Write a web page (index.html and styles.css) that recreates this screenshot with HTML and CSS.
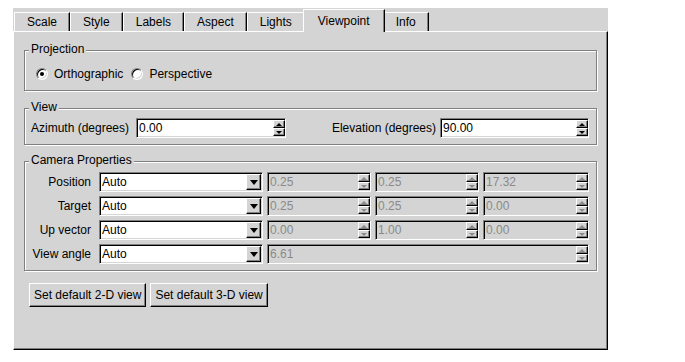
FILE: index.html
```html
<!DOCTYPE html>
<html>
<head>
<meta charset="utf-8">
<link rel="stylesheet" href="styles.css">
</head>
<body>
<div class="dialog">
  <div class="tabs">
    <div class="tab">Scale</div>
    <div class="tab">Style</div>
    <div class="tab">Labels</div>
    <div class="tab">Aspect</div>
    <div class="tab">Lights</div>
    <div class="tab active">Viewpoint</div>
    <div class="tab">Info</div>
  </div>
  <div class="pane">
    <fieldset class="group">
      <legend>Projection</legend>
      <div class="radios">
        <span class="radio"><span class="rb on"></span>Orthographic</span>
        <span class="radio"><span class="rb"></span>Perspective</span>
      </div>
    </fieldset>
    <fieldset class="group">
      <legend>View</legend>
      <div class="viewrow">
        <div class="pair pair-left">
          <span>Azimuth (degrees)</span>
          <div class="field spin w150"><span class="val">0.00</span><span class="arrows"><span class="ar up"></span><span class="ar dn"></span></span></div>
        </div>
        <div class="pair pair-right">
          <span>Elevation (degrees)</span>
          <div class="field spin w149"><span class="val">90.00</span><span class="arrows"><span class="ar up"></span><span class="ar dn"></span></span></div>
        </div>
      </div>
    </fieldset>
    <fieldset class="group">
      <legend>Camera Properties</legend>
      <div class="cam">
        <span class="lbl">Position</span>
        <div class="field combo"><span class="val">Auto</span><span class="drop"></span></div>
        <div class="field spin off"><span class="val">0.25</span><span class="arrows"><span class="ar up"></span><span class="ar dn"></span></span></div>
        <div class="field spin off"><span class="val">0.25</span><span class="arrows"><span class="ar up"></span><span class="ar dn"></span></span></div>
        <div class="field spin off"><span class="val">17.32</span><span class="arrows"><span class="ar up"></span><span class="ar dn"></span></span></div>

        <span class="lbl">Target</span>
        <div class="field combo"><span class="val">Auto</span><span class="drop"></span></div>
        <div class="field spin off"><span class="val">0.25</span><span class="arrows"><span class="ar up"></span><span class="ar dn"></span></span></div>
        <div class="field spin off"><span class="val">0.25</span><span class="arrows"><span class="ar up"></span><span class="ar dn"></span></span></div>
        <div class="field spin off"><span class="val">0.00</span><span class="arrows"><span class="ar up"></span><span class="ar dn"></span></span></div>

        <span class="lbl">Up vector</span>
        <div class="field combo"><span class="val">Auto</span><span class="drop"></span></div>
        <div class="field spin off"><span class="val">0.00</span><span class="arrows"><span class="ar up"></span><span class="ar dn"></span></span></div>
        <div class="field spin off"><span class="val">1.00</span><span class="arrows"><span class="ar up"></span><span class="ar dn"></span></span></div>
        <div class="field spin off"><span class="val">0.00</span><span class="arrows"><span class="ar up"></span><span class="ar dn"></span></span></div>

        <span class="lbl">View angle</span>
        <div class="field combo"><span class="val">Auto</span><span class="drop"></span></div>
        <div class="field spin off wide"><span class="val">6.61</span><span class="arrows"><span class="ar up"></span><span class="ar dn"></span></span></div>
      </div>
    </fieldset>
    <div class="buttons">
      <button class="btn" type="button">Set default 2-D view</button>
      <button class="btn" type="button">Set default 3-D view</button>
    </div>
  </div>
</div>
</body>
</html>
```
FILE: styles.css
```css
* { box-sizing: border-box; }

body {
  margin: 8px 0 0 13px;
  background: #fff;
  font: 12px/14px "Liberation Sans", Arial, sans-serif;
  color: #000;
}

.dialog {
  width: 595px;
  height: 342px;
  background: #d4d4d4;
  display: flex;
  flex-direction: column;
}

/* ---------- tabs ---------- */
.tabs {
  height: 23px;
  flex: none;
  display: flex;
  align-items: flex-end;
  padding-left: 1px;
  position: relative;
  z-index: 1;
}
.tab {
  height: 19px;
  line-height: 18px;
  padding: 0 12px;
  border-top: 1px solid #fff;
  border-left: 1px solid #fff;
  border-right: 1px solid #000;
  box-shadow: inset -1px 0 0 #808080;
  white-space: nowrap;
}
.tab.active {
  position: relative;
  height: 23px;
  margin: 0 -2px -1px;
  padding: 2px 14px 0;
  background: #d4d4d4;
}

/* ---------- pane ---------- */
.pane {
  flex: 1;
  border-top: 1px solid #fff;
  border-left: 1px solid #fff;
  border-right: 1px solid #000;
  border-bottom: 1px solid #000;
  box-shadow: inset -1px -1px 0 #808080;
  padding: 10px 10px 0;
}

/* ---------- etched groups ---------- */
.group {
  margin: 0;
  padding: 0;
  min-width: 0;
  border: 1px solid #808080;
  box-shadow: inset 1px 1px 0 #fff, 1px 1px 0 #fff;
}
.group + .group { margin-top: 9px; }
.group + .group + .group { margin-top: 8px; }
.group legend {
  margin-left: 4px;
  padding: 0 2px 3px;
  line-height: 14px;
  background: #d4d4d4;
}

/* ---------- projection ---------- */
.radios {
  display: flex;
  align-items: center;
  height: 22px;
  margin: 4px 6px 5px;
}
.radio {
  display: flex;
  align-items: center;
  margin-left: 5px;
  margin-right: 3px;
}
.radio + .radio { margin-left: 5px; }
.rb {
  width: 12px;
  height: 12px;
  margin-right: 6px;
  border-radius: 50%;
  border: 1px solid;
  border-color: #808080 #fff #fff #808080;
  box-shadow: inset 1px 1px 0 #000, inset -1px -1px 0 #d4d4d4;
  background: #fff;
  display: flex;
  align-items: center;
  justify-content: center;
}
.rb.on::after {
  content: "";
  width: 4px;
  height: 4px;
  border-radius: 50%;
  background: #000;
}

/* ---------- view ---------- */
.viewrow {
  display: flex;
  justify-content: space-between;
  margin: 1px 7px 6px 6px;
}
.pair {
  display: flex;
  align-items: center;
}
.pair-left { gap: 7px; }
.pair-right { gap: 4px; }
.w150 { width: 150px; }
.w149 { width: 149px; }

/* ---------- fields ---------- */
.field {
  height: 20px;
  display: flex;
  align-items: center;
  border: 1px solid;
  border-color: #808080 #fff #fff #808080;
  box-shadow: inset 1px 1px 0 #000, inset -1px -1px 0 #d4d4d4;
  background: #fff;
}
.field .val {
  flex: 1;
  padding-left: 2px;
  white-space: nowrap;
  overflow: hidden;
}
.arrows {
  align-self: stretch;
  width: 12px;
  padding: 1px 0;
  display: flex;
  flex-direction: column;
}
.ar {
  flex: 1;
  border: 1px solid;
  border-color: #fff #000 #000 #fff;
  box-shadow: inset -1px -1px 0 #808080;
  background: #d4d4d4;
  display: flex;
  align-items: center;
  justify-content: center;
}
.ar::before {
  content: "";
  width: 0;
  height: 0;
  border-left: 3px solid transparent;
  border-right: 3px solid transparent;
}
.ar.up::before { border-bottom: 3px solid #000; }
.ar.dn::before { border-top: 3px solid #000; }

.field.off { background: #d4d4d4; color: #8a8a8a; }
.field.off .ar.up::before { border-bottom-color: #8a8a8a; }
.field.off .ar.dn::before { border-top-color: #8a8a8a; }

.combo .drop {
  align-self: stretch;
  width: 15px;
  margin: 1px 1px 1px 0;
  border: 1px solid;
  border-color: #fff #000 #000 #fff;
  box-shadow: inset -1px -1px 0 #808080;
  background: #d4d4d4;
  display: flex;
  align-items: center;
  justify-content: center;
}
.combo .drop::before {
  content: "";
  width: 0;
  height: 0;
  border-left: 4px solid transparent;
  border-right: 4px solid transparent;
  border-top: 5px solid #000;
}

/* ---------- camera ---------- */
.cam {
  display: grid;
  grid-template-columns: 64px 164px 104px 104px 1fr;
  grid-auto-rows: 20px;
  column-gap: 4px;
  row-gap: 4px;
  margin: 2px 7px 6px 6px;
}
.lbl {
  align-self: center;
  text-align: right;
  padding-right: 4px;
  white-space: nowrap;
}
.wide { grid-column: 3 / -1; }

/* ---------- buttons ---------- */
.buttons {
  display: flex;
  gap: 4px;
  margin: 12px 0 0 5px;
}
.btn {
  height: 24px;
  padding: 0 4px;
  font: inherit;
  color: #000;
  background: #d4d4d4;
  border: 1px solid;
  border-color: #fff #000 #000 #fff;
  box-shadow: inset -1px -1px 0 #808080;
  border-radius: 0;
}
```
